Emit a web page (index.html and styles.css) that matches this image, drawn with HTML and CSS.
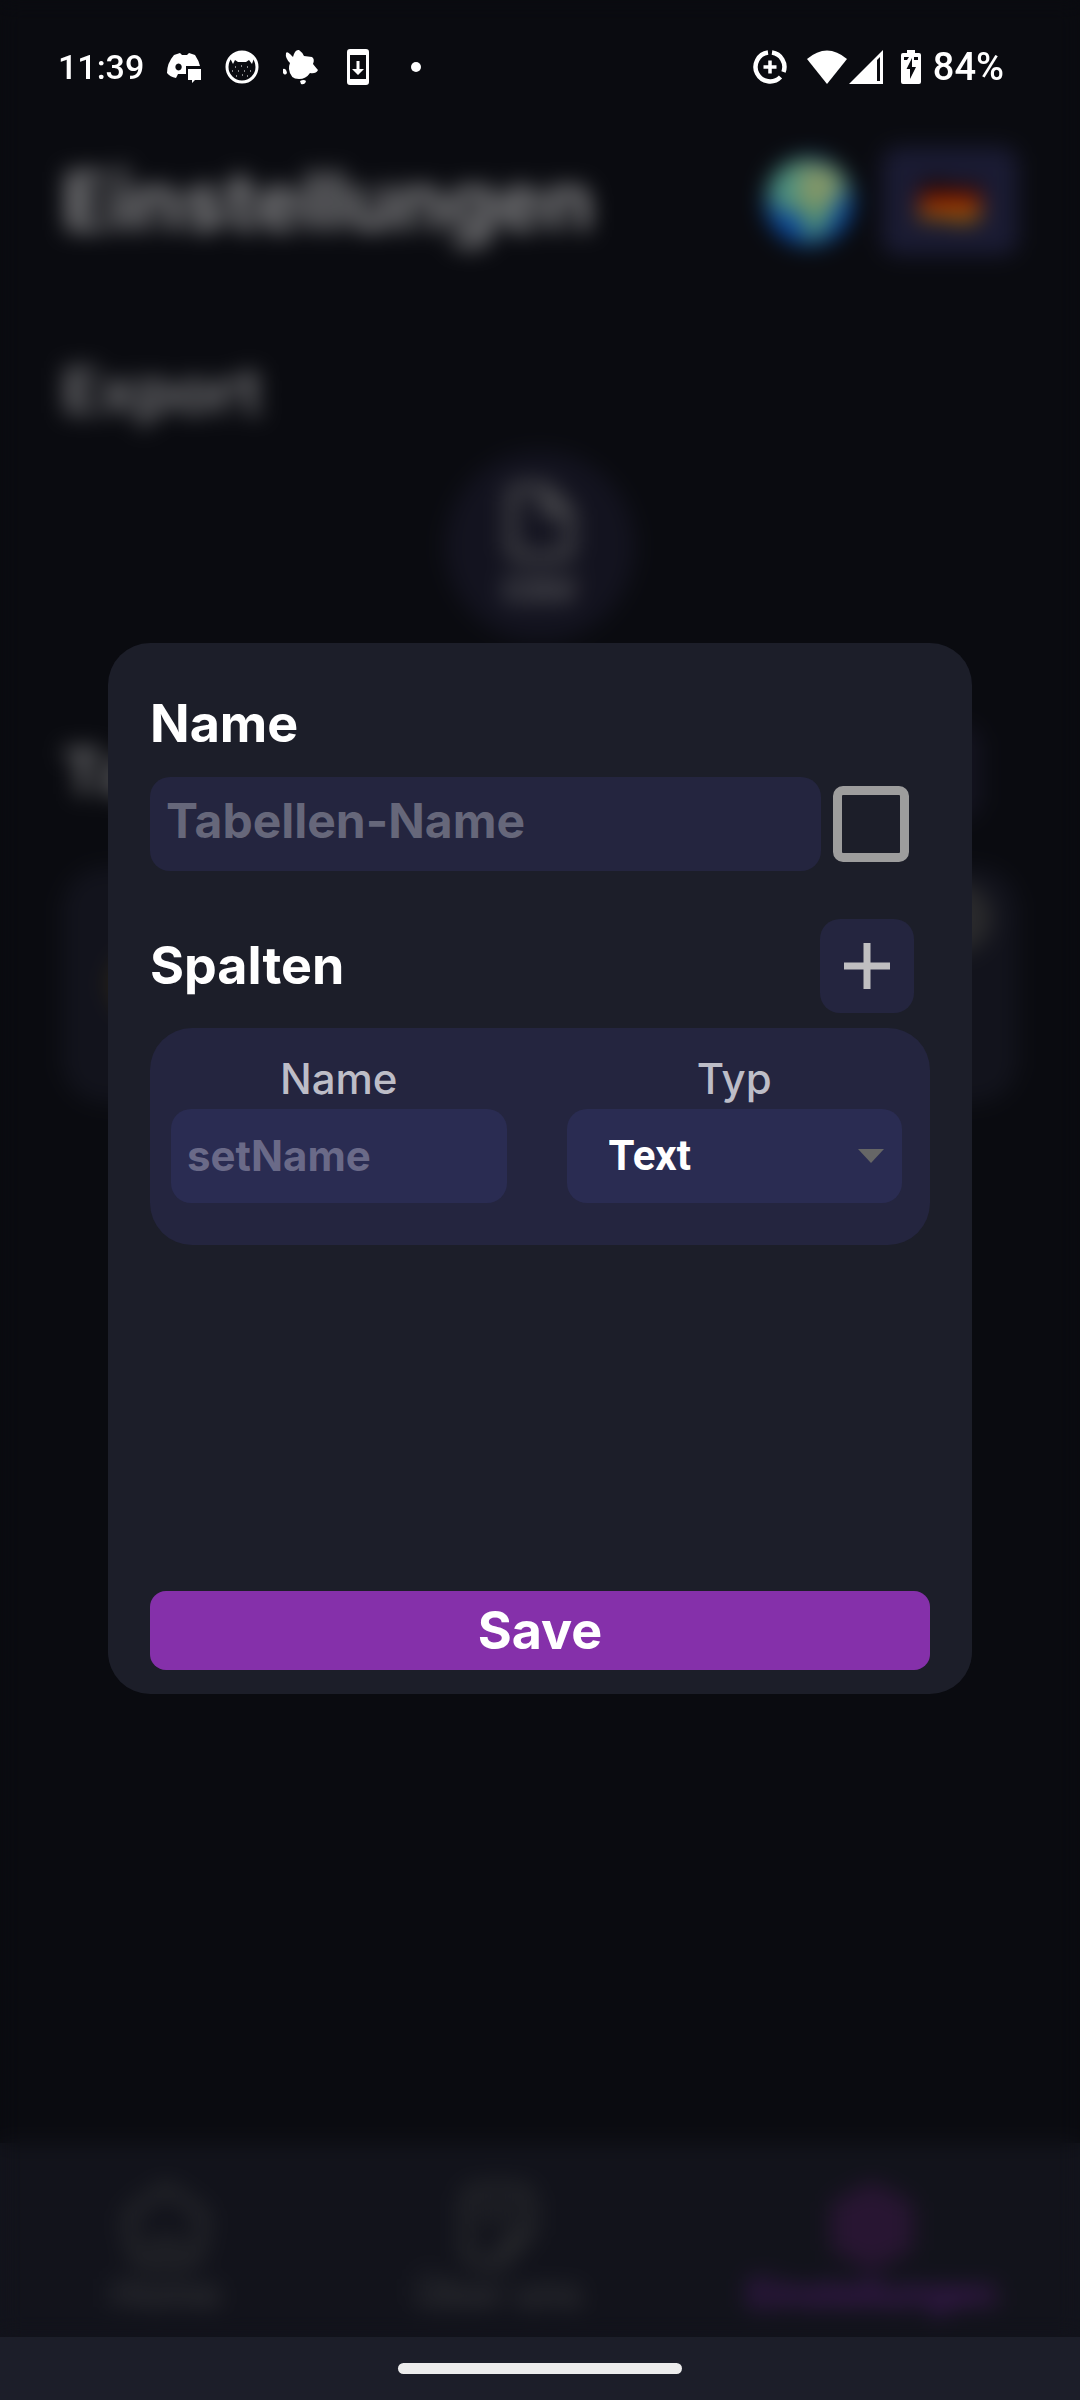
FILE: index.html
```html
<!DOCTYPE html>
<html lang="de">
<head>
<meta charset="utf-8">
<meta name="viewport" content="width=device-width, initial-scale=1">
<title>Einstellungen</title>
<link rel="stylesheet" href="styles.css">
</head>
<body>
<div class="screen">
  <div class="app">
    <header class="app-header">
      <h1>Einstellungen</h1>
      <svg class="globe" viewBox="0 0 90 90" aria-hidden="true">
        <circle cx="45" cy="45" r="44" fill="#0c4a9c"/>
        <path d="M8 24 Q22 4 44 4 L70 10 Q84 26 84 36 L74 42 L68 58 L54 80 L44 84 L38 58 L18 54 L4 42Z" fill="#56926f"/>
        <path d="M40 8 L70 12 L78 34 L60 52 L44 52 L30 34Z" fill="#829668"/>
        <path d="M12 34 L30 20 L36 30 L20 44Z" fill="#3c8c94"/>
      </svg>
      <button class="flag-button" type="button" aria-label="Deutsch">
        <svg width="60" height="44" viewBox="0 0 60 44" aria-hidden="true">
          <path d="M0 4 Q15 -2 30 4 T60 2 V16 H0Z" fill="#120608"/>
          <path d="M0 15 H60 V30 H0Z" fill="#981c00"/>
          <path d="M0 29 H60 V40 Q45 46 30 41 T0 42Z" fill="#956007"/>
        </svg>
      </button>
    </header>
    <main class="app-main">
      <h2>Export</h2>
      <button class="csv-button" type="button">
        <svg width="70" height="80" viewBox="0 0 76 84" fill="none" stroke="#4e4e51" stroke-width="10" aria-hidden="true">
          <path d="M18 5 H44 L70 31 V70 Q70 79 61 79 H18 Q7 79 7 70 V14 Q7 5 18 5Z"/>
          <path d="M44 5 V31 H70"/>
        </svg>
        <span>CSV</span>
      </button>
      <div class="tables-head">
        <h2>Tabellen</h2>
        <button class="add-table" type="button" aria-label="Tabelle hinzufügen"></button>
      </div>
      <div class="table-card">
        <span class="card-dot"></span>
        <span class="card-close"></span>
      </div>
    </main>
    <nav class="tabs">
      <a href="#home">
        <svg viewBox="0 0 90 90" fill="none" stroke="#27282c" stroke-width="11" aria-hidden="true"><path d="M45 7 L76 28 Q84 34 82 46 L77 70 Q74 83 60 83 H30 Q16 83 13 70 L8 46 Q6 34 14 28Z"/><path d="M28 68 Q45 54 62 68"/></svg>
        <span>Home</span>
      </a>
      <a href="#about">
        <svg viewBox="0 0 90 90" fill="none" stroke="#27282c" stroke-width="11" aria-hidden="true"><path d="M44 82 H28 Q13 82 13 67 V23 Q13 8 28 8 H62 Q77 8 77 23 V50 L48 82 Q48 54 77 50M28 32 H62"/></svg>
        <span>Über uns</span>
      </a>
      <a class="active" href="#settings">
        <svg viewBox="0 0 90 90" fill="#281532" aria-hidden="true"><path d="M45 0 L86 22 V68 L45 90 L4 68 V22Z"/></svg>
        <span>Einstellungen</span>
      </a>
    </nav>
  </div>

  <div class="system-nav"><span class="handle"></span></div>

  <div class="overlay">
    <form class="dialog" role="dialog" aria-label="Tabelle">
      <label class="title" for="table-name">Name</label>
      <div class="name-row">
        <input class="field name-field" id="table-name" type="text" placeholder="Tabellen-Name">
        <input class="check" type="checkbox" aria-label="Tabelle aktiv">
      </div>
      <div class="columns-head">
        <h2 class="title">Spalten</h2>
        <button class="add-column" type="button" aria-label="Spalte hinzufügen">
          <svg width="46" height="46" viewBox="0 0 46 46" aria-hidden="true"><path d="M23 0V46M0 23H46" stroke="#c0bfc1" stroke-width="7"/></svg>
        </button>
      </div>
      <div class="column-panel">
        <div class="column">
          <label for="set-name">Name</label>
          <input class="field inner-field" id="set-name" type="text" placeholder="setName">
        </div>
        <div class="column">
          <label for="set-type">Typ</label>
          <div class="select-wrap">
            <select class="field inner-field" id="set-type"><option>Text</option></select>
            <svg class="arrow" width="26" height="14" viewBox="0 0 26 14" aria-hidden="true"><path d="M0 0H26L13 14Z" fill="#666"/></svg>
          </div>
        </div>
      </div>
      <button class="save" type="submit">Save</button>
    </form>
  </div>

  <div class="status-bar">
    <div class="status-left">
      <span class="clock">11:39</span>
      <svg width="36" height="36" viewBox="0 0 36 36" fill="#fff" aria-hidden="true">
        <path fill-rule="evenodd" d="M8 6 L14 4 L16 6 H21 L23 4 L29 6 Q33 12 34 17 H20 V25 H12 L10 29 Q4 28 1 24 Q1 14 8 6ZM12.500 14.500a3.200 3.500 0 1 0 .1 0Z"/>
        <path d="M22 20H35V31H29L26 34V31H22Z"/>
      </svg>
      <svg width="36" height="36" viewBox="0 0 36 36" aria-hidden="true">
        <circle cx="18" cy="18" r="15" fill="none" stroke="#fff" stroke-width="3"/>
        <path d="M6 9 Q18 -3 30 9 L28 15 L25 11 L22 13 H14 L11 11 L9 15Z" fill="#fff"/>
        <path d="M11 18h1M17 17h1M23 18h1M8 22h1M14 22h1M20 22h1M26 22h1M12 27h1M18 26h1M23 27h1" stroke="#fff" stroke-width="1"/>
      </svg>
      <svg width="36" height="36" viewBox="0 0 36 36" fill="#fff" aria-hidden="true">
        <path d="M4 4 Q5 2 8 5 L11 8 Q13 0 17 1 Q20 3 22 7 L30 8 Q33 10 31 15 Q35 20 36 21 Q34 25 28 24 Q24 30 17 30 Q8 30 7 20 Q7 16 8 14 Q3 9 4 4Z"/>
        <path d="M1 20q3-1 4 4q-2 3-4 0ZM18 32q4-2 6 0q-1 4-5 3Z"/>
      </svg>
      <svg width="36" height="36" viewBox="0 0 36 36" aria-hidden="true">
        <path fill="#fff" fill-rule="evenodd" d="M10 0H26Q29 0 29 3V33Q29 36 26 36H10Q7 36 7 33V3Q7 0 10 0ZM10 6V30H26V6Z"/>
        <path fill="#fff" d="M16.500 12H19.500V20H24L18 26L12 20H16.500Z"/>
      </svg>
      <span class="dot"></span>
    </div>
    <div class="status-right">
      <svg class="saver" width="34" height="34" viewBox="0 0 34 34" fill="none" stroke="#fff" aria-hidden="true">
        <path d="M19 2.600A14.500 14.500 0 0 1 30.500 22M27.500 27A14.500 14.500 0 1 1 15 2.600" stroke-width="4.500"/>
        <path d="M17 10.500V23.500M10.500 17H23.500" stroke-width="3.500"/>
      </svg>
      <svg width="40" height="34" viewBox="0 0 40 34" fill="#fff" aria-hidden="true"><path d="M0 9Q20-8 40 9L20 34Z"/></svg>
      <svg class="signal" width="34" height="34" viewBox="0 0 34 34" aria-hidden="true"><path d="M0 34L34 0V34Z" fill="#fff"/><path d="M28 10L31 7V31H28Z" fill="#0a0b10"/></svg>
      <svg class="battery" width="20" height="34" viewBox="0 0 20 34" aria-hidden="true"><path d="M6 0H14V3H18Q20 3 20 5V32Q20 34 18 34H2Q0 34 0 32V5Q0 3 2 3H6Z" fill="#fff"/><path d="M3 7H8L6 10H3ZM13 7H17V10H13ZM11 8L5.500 19H9V29L15 17H11Z" fill="#0a0b10"/></svg>
      <span class="percent">84%</span>
    </div>
  </div>
</div>
</body>
</html>
```
FILE: styles.css
```css
* { box-sizing: border-box; }

body {
  margin: 0;
  background: #0a0b10;
  color: #fff;
  font-family: Inter, "Open Sans", sans-serif;
}

h1, h2 { margin: 0; font-weight: 700; }
button, input, select { margin: 0; padding: 0; border: 0; font: inherit; color: inherit; }
svg { display: block; flex: none; }

.screen {
  position: relative;
  display: flex;
  flex-direction: column;
  min-height: 100vh;
}

/* Settings page behind the dialog */
.app { flex: 1; display: flex; flex-direction: column; color: #88888a; }

.app-header {
  display: flex;
  align-items: center;
  padding: 147px 62px 0;
}
.app-header h1 { flex: 1; font-size: 80px; line-height: 108px; }
.globe { width: 90px; height: 90px; margin-right: 28px; }
.flag-button {
  display: flex;
  align-items: center;
  justify-content: center;
  width: 136px;
  height: 108px;
  border-radius: 16px;
  background: #1a1b33;
}

.app-main { flex: 1; display: flex; flex-direction: column; padding: 96px 62px 0; }
.app-main h2 { font-size: 62px; line-height: 80px; color: #727275; }
.csv-button {
  display: flex;
  flex-direction: column;
  align-items: center;
  justify-content: center;
  gap: 8px;
  align-self: center;
  width: 190px;
  height: 190px;
  margin: 20px 0 84px;
  border-radius: 50%;
  background: #13131f;
  color: #626265;
  font-size: 34px;
  line-height: 40px;
  font-weight: 700;
}
.tables-head { display: flex; align-items: center; justify-content: space-between; padding-right: 36px; }
.add-table { width: 94px; height: 94px; border-radius: 20px; background: #13131f; }
.table-card {
  display: flex;
  justify-content: space-between;
  height: 236px;
  margin-top: 48px;
  padding: 16px 26px 18px 46px;
  border-radius: 42px;
  background: #12131c;
}
.card-dot { align-self: center; width: 70px; height: 70px; border-radius: 50%; background: #2a2418; }
.card-close { width: 70px; height: 70px; border-radius: 50%; background: #2a2a2c; }

.tabs {
  display: flex;
  padding: 38px 0 22px;
  background: #12131b;
}
.tabs a {
  display: flex;
  flex: 4;
  flex-direction: column;
  align-items: center;
  min-width: 0;
  gap: 0;
  color: #333438;
  font-size: 38px;
  line-height: 44px;
  font-weight: 600;
  text-decoration: none;
}
.tabs svg { width: 90px; height: 90px; }
.tabs .active { flex: 5; color: #461a60; }

.system-nav {
  display: flex;
  align-items: center;
  justify-content: center;
  height: 63px;
  background: #1c1e29;
}
.handle { width: 284px; height: 11px; border-radius: 6px; background: #ececec; }

/* Dialog */
.overlay {
  position: absolute;
  inset: 0 0 63px;
  display: flex;
  align-items: center;
  justify-content: center;
  backdrop-filter: blur(11px);
}
.dialog {
  display: flex;
  flex-direction: column;
  width: 80%;
  height: 45%;
  min-height: 800px;
  padding: 50px 42px 24px;
  border-radius: 42px;
  background: #1c1e29;
}
.title { font-size: 52px; line-height: 62px; font-weight: 700; }
.name-row { display: flex; align-items: center; gap: 12px; margin-top: 22px; padding-right: 21px; }
.field {
  width: 100%;
  min-width: 0;
  height: 94px;
  padding: 0 16px;
  border-radius: 20px;
  background: #24253f;
  font-weight: 700;
}
.name-field { flex: 1; padding-bottom: 6px; font-size: 48px; }
.field::placeholder { color: #66677a; opacity: 1; }
.check {
  appearance: none;
  flex: none;
  width: 76px;
  height: 76px;
  border: 9px solid #9d9d9d;
  border-radius: 10px;
}
.columns-head {
  display: flex;
  align-items: center;
  justify-content: space-between;
  margin: 48px 16px 15px 0;
}
.add-column {
  display: flex;
  align-items: center;
  justify-content: center;
  width: 94px;
  height: 94px;
  border-radius: 20px;
  background: #24253f;
}
.column-panel {
  display: grid;
  grid-template-columns: 1fr 1fr;
  gap: 60px;
  padding: 26px 28px 42px 21px;
  border-radius: 42px;
  background: #24253f;
}
.column { display: flex; flex-direction: column; gap: 5px; }
.column label {
  color: #bdbdc7;
  font-size: 42px;
  line-height: 50px;
  font-weight: 500;
  text-align: center;
}
.inner-field { background: #2a2c52; font-size: 42px; }
.inner-field::placeholder { color: #6a6a88; }
.select-wrap { display: grid; align-items: center; }
.select-wrap > * { grid-area: 1 / 1; }
.select-wrap select { appearance: none; padding-left: 42px; font-family: Roboto, sans-serif; }
.arrow { justify-self: end; margin-right: 18px; pointer-events: none; }
.save {
  height: 79px;
  margin-top: auto;
  border-radius: 16px;
  background: #8530aa;
  font-size: 52px;
  line-height: 62px;
  font-weight: 700;
}

/* Phone status bar */
.status-bar {
  position: absolute;
  inset: 0 0 auto;
  display: flex;
  align-items: center;
  justify-content: space-between;
  height: 133px;
  padding: 0 76px 0 58px;
  font-family: Roboto, sans-serif;
  font-size: 38px;
  line-height: 44px;
  font-weight: 500;
}
.status-left, .status-right { display: flex; align-items: center; }
.status-left { gap: 22px; }
.clock { width: 86px; font-size: 34px; }
.dot { width: 10px; height: 10px; margin-left: 13px; border-radius: 50%; background: #fff; }
.saver { margin-right: 20px; }
.signal { margin: 0 18px 0 2px; }
.battery { margin-right: 12px; }
```
